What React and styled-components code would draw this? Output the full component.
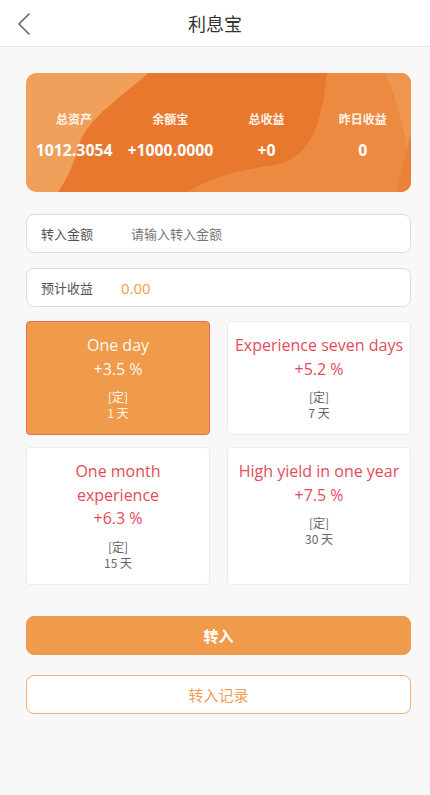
import React from 'react';
import styled, { createGlobalStyle } from 'styled-components';

const GlobalStyle = createGlobalStyle`
    html, body {
        margin: 0;
        padding: 0;
        background-color: #f8f8f8;
        font-family: "Noto Sans CJK SC", "Noto Sans", sans-serif;
    }
    * {
        box-sizing: border-box;
    }
`

const Page = styled.div`
    min-height: 795px;
    background-color: #f8f8f8;
`

const Header = styled.div`
    height: 47px;
    background-color: #ffffff;
    border-bottom: 1px solid #e8e8e8;
    display: flex;
    align-items: center;
    justify-content: center;
    position: relative;
`

const BackButton = styled.div`
    position: absolute;
    left: 14px;
    top: 11px;
    width: 20px;
    height: 26px;
    display: flex;
    align-items: center;
    justify-content: center;
`

const Title = styled.h1`
    margin: 0;
    font-size: 18px;
    font-weight: 400;
    color: #333333;
`

const Content = styled.div`
    padding: 26px 19px 40px 26px;
    display: flex;
    flex-direction: column;
`

const Banner = styled.div`
    position: relative;
    height: 119px;
    border-radius: 10px;
    overflow: hidden;
    background-color: #f0a05a;
`

const BannerArt = styled.svg`
    position: absolute;
    inset: 0;
    width: 100%;
    height: 100%;
`

const Stats = styled.div`
    position: relative;
    display: grid;
    grid-template-columns: repeat(4, 1fr);
    height: 100%;
    align-content: center;
    padding-top: 4px;
`

const Stat = styled.div`
    display: flex;
    flex-direction: column;
    align-items: center;
    color: #ffffff;
`

const StatLabel = styled.span`
    font-size: 12px;
    font-weight: 700;
    line-height: 18px;
    color: #fff3e8;
`

const StatValue = styled.span`
    margin-top: 13px;
    font-size: 15.8px;
    font-weight: 700;
    line-height: 19px;
    font-family: "Open Sans", "Noto Sans CJK SC", sans-serif;
`

const Field = styled.div`
    margin-top: ${props => props.$top}px;
    height: 39px;
    background-color: #ffffff;
    border: 1px solid #dddddd;
    border-radius: 8px;
    display: flex;
    align-items: center;
    padding-left: 14px;
`

const FieldLabel = styled.span`
    width: ${props => props.$width}px;
    font-size: 13px;
    color: #555555;
`

const Placeholder = styled.span`
    font-size: 13px;
    color: #777777;
`

const Estimate = styled.span`
    font-size: 15px;
    color: #f0a050;
    font-family: "Open Sans", sans-serif;
`

const Plans = styled.div`
    margin-top: 14px;
    display: grid;
    grid-template-columns: 1fr 1fr;
    column-gap: 17px;
    row-gap: 12px;
`

const Plan = styled.div`
    padding: 12px 4px 13px;
    border-radius: 4px;
    border: 1px solid ${props => props.$active ? '#ea6a5a' : '#ececec'};
    background-color: ${props => props.$active ? '#f09a4c' : '#ffffff'};
    display: flex;
    flex-direction: column;
    align-items: center;
    text-align: center;
`

const PlanName = styled.div`
    font-size: 16px;
    line-height: 23.5px;
    color: ${props => props.$active ? '#fff8ee' : '#e64a5c'};
    font-family: "Open Sans", "Noto Sans CJK SC", sans-serif;
    padding: 0 ${props => props.$narrow ? 40 : 0}px;
`

const PlanRate = styled.div`
    font-size: 16px;
    line-height: 23.5px;
    color: ${props => props.$active ? '#fff8ee' : '#e64a5c'};
    font-family: "Open Sans", sans-serif;
`

const PlanMeta = styled.div`
    margin-top: 8px;
    font-size: 12px;
    line-height: 16px;
    color: ${props => props.$active ? '#fff8ee' : '#666666'};
`

const Button = styled.button`
    margin-top: ${props => props.$top}px;
    height: 39px;
    border-radius: 8px;
    border: 1px solid ${props => props.$outline ? '#f2ae74' : '#f09a4c'};
    background-color: ${props => props.$outline ? '#ffffff' : '#f09a4c'};
    color: ${props => props.$outline ? '#f0a050' : '#ffffff'};
    font-size: 15px;
    font-weight: ${props => props.$outline ? 400 : 700};
    font-family: "Noto Sans CJK SC", sans-serif;
`

const stats = [
    { label: '总资产', value: '1012.3054' },
    { label: '余额宝', value: '+1000.0000' },
    { label: '总收益', value: '+0' },
    { label: '昨日收益', value: '0' },
]

const plans = [
    { name: 'One day', rate: '+3.5 %', days: '1 天', active: true },
    { name: 'Experience seven days', rate: '+5.2 %', days: '7 天' },
    { name: 'One month experience', rate: '+6.3 %', days: '15 天', narrow: true },
    { name: 'High yield in one year', rate: '+7.5 %', days: '30 天' },
]

const App = () => {
    return (
        <Page>
            <GlobalStyle />
            <Header>
                <BackButton>
                    <svg width="14" height="24" viewBox="0 0 14 24">
                        <path d="M12.5 1.5 L2 12 L12.5 22.5" fill="none" stroke="#666" strokeWidth="1.6" />
                    </svg>
                </BackButton>
                <Title>利息宝</Title>
            </Header>
            <Content>
                <Banner>
                    <BannerArt viewBox="0 0 385 119" preserveAspectRatio="none">
                        <path d="M122 0 C95 25 60 45 52 75 C47 95 38 110 32 119 L163 119 C185 105 210 98 250 92 C280 86 296 60 301 0 Z" fill="#e8782e" />
                        <path d="M301 0 C296 60 280 86 250 92 C210 98 185 105 163 119 L385 119 L385 0 Z" fill="#ec8a42" />
                        <path d="M360 0 C372 30 378 60 385 90 L385 0 Z" fill="#ee9650" />
                        <path d="M370 119 C375 100 380 80 385 60 L385 119 Z" fill="#e98238" />
                    </BannerArt>
                    <Stats>
                        {stats.map(s => (
                            <Stat key={s.label}>
                                <StatLabel>{s.label}</StatLabel>
                                <StatValue>{s.value}</StatValue>
                            </Stat>
                        ))}
                    </Stats>
                </Banner>

                <Field $top={22}>
                    <FieldLabel $width={90}>转入金额</FieldLabel>
                    <Placeholder>请输入转入金额</Placeholder>
                </Field>
                <Field $top={15}>
                    <FieldLabel $width={80}>预计收益</FieldLabel>
                    <Estimate>0.00</Estimate>
                </Field>

                <Plans>
                    {plans.map(p => (
                        <Plan key={p.name} $active={p.active}>
                            <PlanName $active={p.active} $narrow={p.narrow}>{p.name}</PlanName>
                            <PlanRate $active={p.active}>{p.rate}</PlanRate>
                            <PlanMeta $active={p.active}>[定]<br />{p.days}</PlanMeta>
                        </Plan>
                    ))}
                </Plans>

                <Button $top={31}>转入</Button>
                <Button $top={20} $outline>转入记录</Button>
            </Content>
        </Page>
    );
};

export default App;
